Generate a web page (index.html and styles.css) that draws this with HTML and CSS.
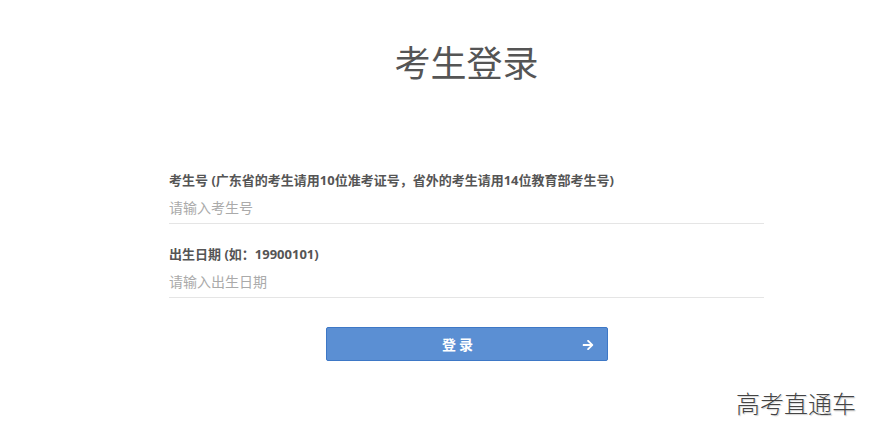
FILE: index.html
```html
<!DOCTYPE html>
<html lang="zh-CN">
<head>
<meta charset="utf-8">
<title>考生登录</title>
<link rel="stylesheet" href="styles.css">
</head>
<body>
<div class="page">
  <h1 class="title">考生登录</h1>
  <form class="form">
    <div class="field">
      <label class="label">考生号 (广东省的考生请用10位准考证号，省外的考生请用14位教育部考生号)</label>
      <input class="input" type="text" placeholder="请输入考生号">
    </div>
    <div class="field">
      <label class="label">出生日期 (如：19900101)</label>
      <input class="input" type="text" placeholder="请输入出生日期">
    </div>
    <div class="actions">
      <button class="btn" type="button">
        <span class="btn-text">登 录</span>
        <svg class="btn-icon" width="12" height="12" viewBox="0 0 448 512" aria-hidden="true"><path fill="#fff" d="M190.5 66.9l22.2-22.2c9.4-9.4 24.6-9.4 33.9 0L441 239c9.4 9.4 9.4 24.6 0 33.9L246.6 467.3c-9.4 9.4-24.6 9.4-33.9 0l-22.2-22.2c-9.5-9.5-9.3-25 .4-34.3L311.4 296H24c-13.3 0-24-10.7-24-24v-32c0-13.3 10.7-24 24-24h287.4L190.9 101.2c-9.8-9.3-10-24.8-.4-34.3z"/></svg>
      </button>
    </div>
  </form>
</div>
<div class="watermark">高考直通车</div>
</body>
</html>
```

FILE: styles.css
```css
html, body {
  margin: 0;
  padding: 0;
  background: #fff;
}
body {
  font-family: "Open Sans", "Noto Sans CJK SC", sans-serif;
  color: #555;
}
.page {
  width: 595px;
  margin: 0 0 0 169px;
  padding-top: 36px;
}
.title {
  margin: 0;
  text-align: center;
  font-size: 36px;
  font-weight: normal;
  color: #555;
  line-height: 50px;
  font-family: "Noto Sans CJK SC", sans-serif;
}
.form {
  margin-top: 85px;
}
.field {
  display: flex;
  flex-direction: column;
  border-bottom: 1px solid #e5e5e5;
  margin-bottom: 21px;
}
.label {
  font-size: 13px;
  font-weight: bold;
  color: #555;
  line-height: 18px;
  font-family: "Open Sans", "Noto Sans CJK SC", sans-serif;
}
.input {
  border: none;
  outline: none;
  padding: 0;
  margin-top: 2px;
  height: 32px;
  font-size: 14px;
  font-family: "Noto Sans CJK SC", sans-serif;
  color: #555;
  background: transparent;
}
.input::placeholder {
  color: #aaa;
}
.actions {
  display: flex;
  justify-content: center;
  margin-top: 29px;
}
.btn {
  position: relative;
  width: 282px;
  height: 34px;
  background: #5b8fd3;
  border: 1px solid #3e78c6;
  border-radius: 2px;
  color: #fff;
  display: flex;
  align-items: center;
  justify-content: center;
  padding: 0 18px 0 0;
  cursor: pointer;
}
.btn-text {
  font-size: 14px;
  font-weight: bold;
  font-family: "Noto Sans CJK SC", sans-serif;
}
.btn-icon {
  position: absolute;
  right: 13px;
  top: 11px;
}
.watermark {
  position: absolute;
  left: 736px;
  top: 385px;
  font-size: 24px;
  color: #444;
  font-family: "Noto Sans CJK SC", sans-serif;
  font-weight: 300;
  text-shadow: 0 0 1px #fff, 1px 1px 1px #ccc;
}
```
